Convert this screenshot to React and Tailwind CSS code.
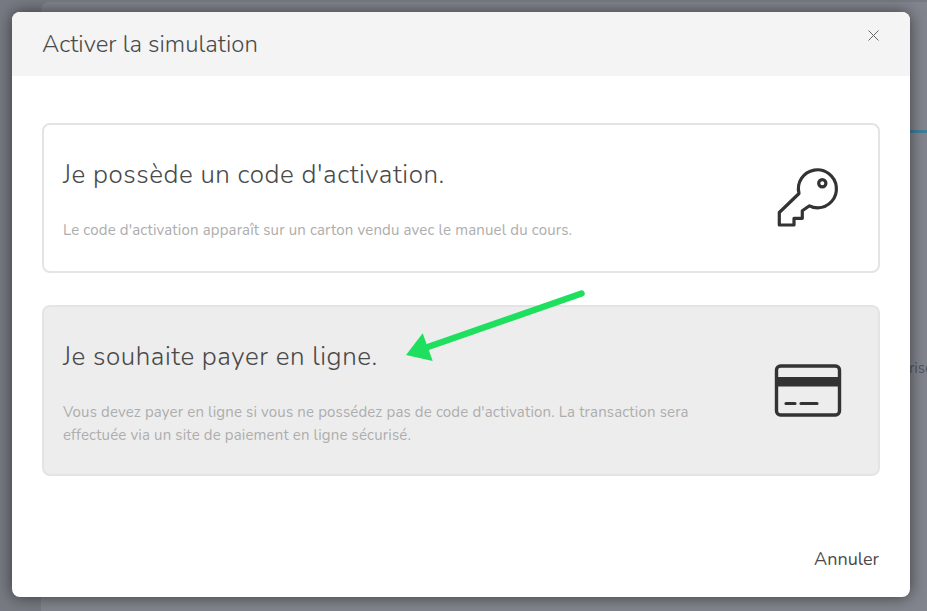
function KeyIcon() {
  return (
    <svg className="translate-x-[1px] translate-y-[1px]" width="68" height="68" viewBox="0 0 68 68" fill="none" stroke="#333333" strokeWidth="3.2" strokeLinejoin="round" strokeLinecap="round">
      <path d="M25 28.5 L5.3 47.5 V60 H20 V53.3 H28.3 V45.7 L35.5 40.8 Q39 42.8 43.7 42.8 A19 19 0 1 0 25 28.5 Z" />
      <circle cx="48.3" cy="18.3" r="3.6" />
    </svg>
  );
}

function CardIcon() {
  return (
    <svg className="translate-x-[1px]" width="68" height="54" viewBox="0 0 68 54" fill="none" stroke="#333333">
      <rect x="2.5" y="2" width="63" height="49" rx="4" strokeWidth="3.4" />
      <rect x="2" y="13" width="64" height="9.5" fill="#333333" stroke="none" />
      <path d="M12 39.5 H21 M27 39.5 H43" strokeWidth="3.2" strokeLinecap="round" />
    </svg>
  );
}

function OptionCard({ title, text, icon, active, height }) {
  return (
    <div className={`flex justify-between rounded-lg border-2 border-[#e4e4e4] pl-[19px] pr-[37px] ${height} ${active ? "bg-[#ededed]" : "bg-white"}`}>
      <div className="w-[630px]">
        <h2 className="mt-[30px] text-[26px] font-light leading-[40px] tracking-[0.56px] text-[#4a4a4a]">{title}</h2>
        <p className="mt-[24px] text-[15px] leading-[22.5px] tracking-[0.15px] text-[#adadad]">{text}</p>
      </div>
      <div className="flex items-center">{icon}</div>
    </div>
  );
}

export default function App() {
  return (
    <div className="relative h-[611px] w-[927px] overflow-hidden bg-[#777a82] font-['Nunito','Lato',sans-serif]">
      <div className="absolute left-[41px] top-[2px] h-[609px] w-[886px] rounded-tl-lg bg-[#82858d]" />
      <div className="absolute right-0 top-[130px] h-[3px] w-[20px] bg-[#3f7f98]" />
      <span className="absolute right-[-6px] top-[357px] text-[15px] text-[#4f5a66]">rise</span>

      <div className="absolute left-[12px] top-[12px] flex h-[585px] w-[898px] flex-col overflow-hidden rounded-lg bg-white shadow-[0_0_16px_rgba(0,0,0,0.55)]">
        <div className="flex h-16 shrink-0 items-start justify-between bg-[#f4f4f4] pl-[30px] pr-[31px]">
          <h1 className="mt-[16px] text-[24px] font-light leading-8 text-[#4a4a4a]">Activer la simulation</h1>
          <svg className="mt-[18px]" width="11" height="11" viewBox="0 0 11 11" stroke="#666666" strokeWidth="1">
            <path d="M0.5 0.5 L10.5 10.5 M10.5 0.5 L0.5 10.5" />
          </svg>
        </div>

        <div className="flex flex-col gap-8 px-[30px] pt-[47px]">
          <OptionCard
            height="h-[150px]"
            title="Je possède un code d'activation."
            text="Le code d'activation apparaît sur un carton vendu avec le manuel du cours."
            icon={<KeyIcon />}
          />
          <OptionCard
            active
            height="h-[171px]"
            title="Je souhaite payer en ligne."
            text="Vous devez payer en ligne si vous ne possédez pas de code d'activation. La transaction sera effectuée via un site de paiement en ligne sécurisé."
            icon={<CardIcon />}
          />
        </div>

        <div className="mt-auto flex justify-end px-[31px] pb-[26px]">
          <button className="text-[18px] leading-6 text-[#4a4a4a]">Annuler</button>
        </div>
      </div>

      <svg className="absolute left-[400px] top-[285px]" width="190" height="80" viewBox="0 0 190 80" fill="none">
        <path d="M181.5 8.5 L25 63" stroke="#1ee05e" strokeWidth="6.5" strokeLinecap="round" />
        <path d="M6 70 L22.7 48.3 L32.7 76 Z" fill="#1ee05e" />
      </svg>
    </div>
  );
}
